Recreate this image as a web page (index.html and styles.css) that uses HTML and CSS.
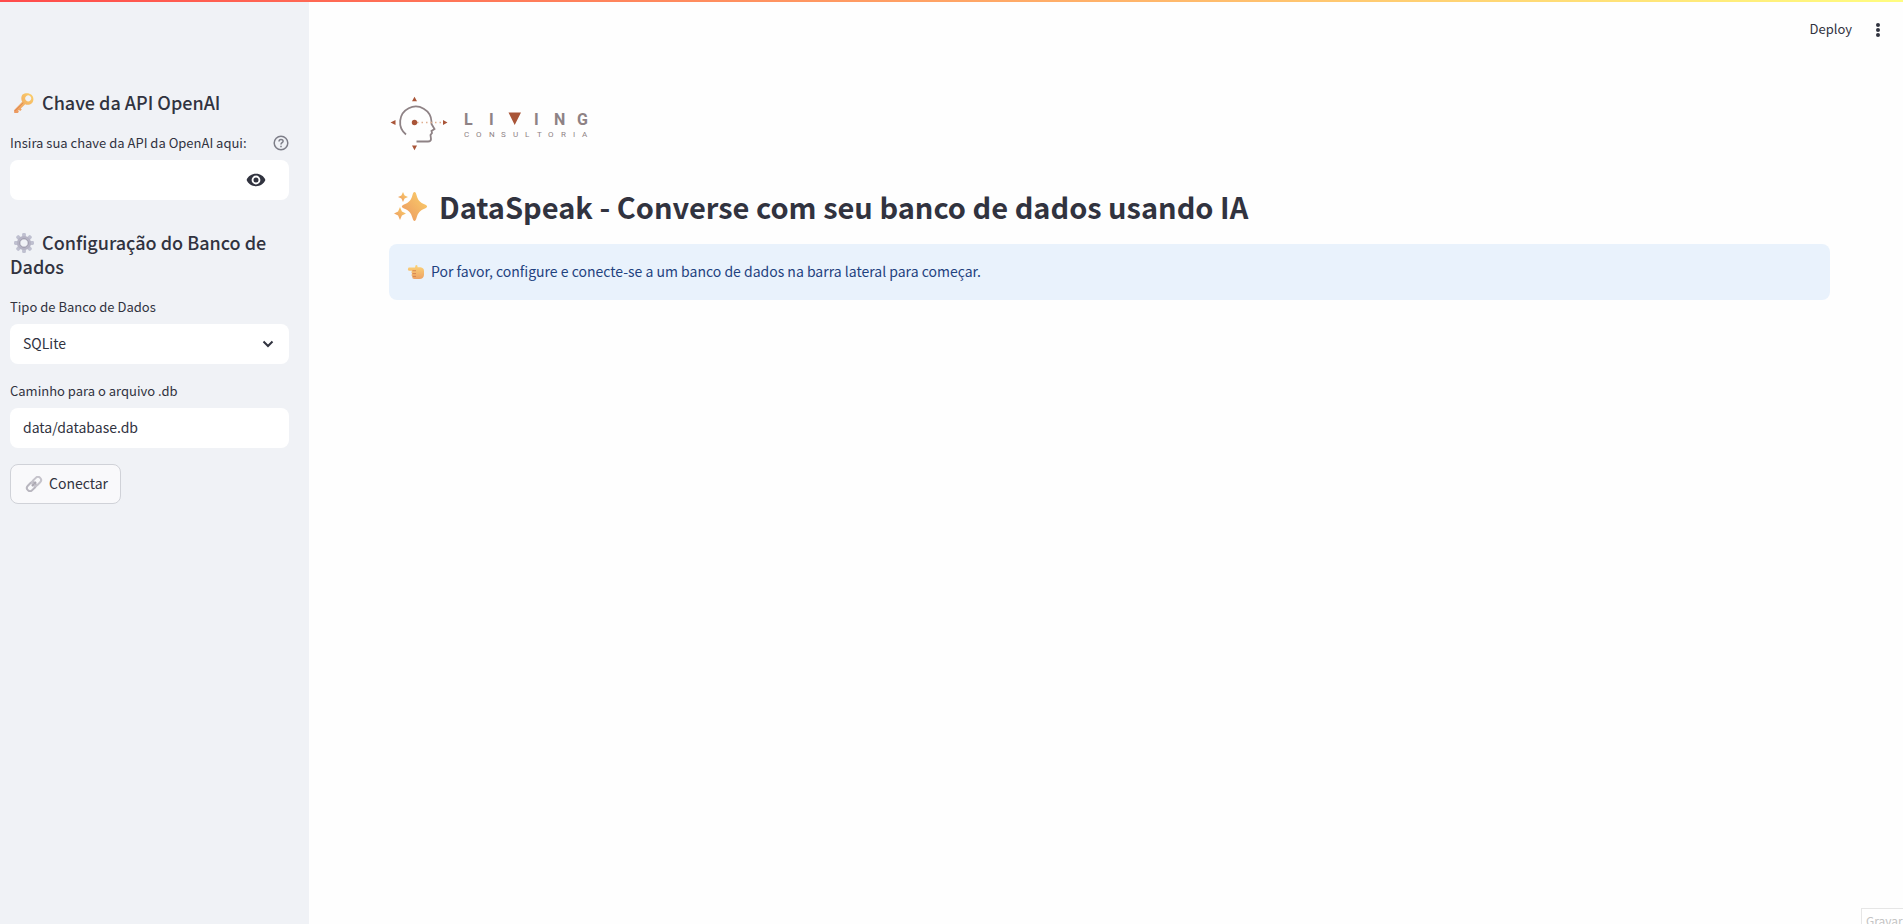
FILE: index.html
```html
<!DOCTYPE html>
<html lang="pt-BR">
<head>
<meta charset="utf-8">
<meta name="viewport" content="width=device-width, initial-scale=1">
<title>DataSpeak</title>
<link rel="stylesheet" href="styles.css">
</head>
<body>
<div class="decoration"></div>
<div class="app">
  <aside class="sidebar">
    <h2 class="section-title">
      <svg class="emoji" viewBox="0 0 28 20" aria-hidden="true">
        <defs><linearGradient id="gold" x1="1" y1="0" x2="0" y2="1"><stop offset="0" stop-color="#fbd16a"/><stop offset="1" stop-color="#eb9660"/></linearGradient></defs>
        <path fill="url(#gold)" fill-rule="evenodd" d="M12.6 1.6C15 -.4 19.400 -.2 21.500 1.800C24 4 24 8 21.800 10.200C19.800 12 17.200 12.200 15.200 11.200L10.800 15.400L11.800 16.500L10.200 18L9 16.900L8 17.800L9 18.800L7.700 20H4.300L4 17.300L12.200 8.800C10.900 6.500 11 3.500 12.600 1.600ZM16.200 3.300A2.900 2.900 0 1 0 20.300 7.400A2.900 2.900 0 0 0 16.200 3.300Z"/>
        <path d="M5 17.900L13.200 9.700" stroke="#d9824f" stroke-width=".8"/>
      </svg>Chave da API OpenAI</h2>
    <div class="field">
      <div class="label-row">
        <label for="api-key">Insira sua chave da API da OpenAI aqui:</label>
        <button class="icon-button help" aria-label="Ajuda">
          <svg width="16" height="16" viewBox="0 0 16 16" fill="none" stroke="#7d7e88" stroke-width="1.500"><circle cx="8" cy="8" r="6.800"/><path d="M6 6.500C6 3.700 10.100 3.800 10.100 6.200C10.100 7.700 8 7.700 8 9.400"/><path d="M8 10.700V12.200"/></svg>
        </button>
      </div>
      <div class="control">
        <input id="api-key" type="password">
        <button class="icon-button reveal" aria-label="Mostrar chave">
          <svg width="20" height="20" viewBox="0 0 20 20"><path fill="#31333f" fill-rule="evenodd" d="M10 3.800C14.300 3.800 18 6.300 19.400 10C18 13.700 14.300 16.200 10 16.200S2 13.700.6 10C2 6.300 5.700 3.800 10 3.800ZM10 5.600A4.400 4.400 0 1 0 10 14.400A4.400 4.400 0 1 0 10 5.600ZM10 7.500A2.500 2.500 0 1 1 10 12.500A2.500 2.500 0 1 1 10 7.500Z"/></svg>
        </button>
      </div>
    </div>
    <h2 class="section-title spaced">
      <svg class="emoji" viewBox="0 0 28 20" aria-hidden="true">
        <g fill="#bfc0d0"><rect id="tooth" x="12.100" y="0" width="3.800" height="20" rx="1.300"/><use href="#tooth" transform="rotate(45 14 10)"/><use href="#tooth" transform="rotate(90 14 10)"/><use href="#tooth" transform="rotate(135 14 10)"/></g>
        <circle cx="14" cy="10" r="5.600" fill="#f0f2f6" stroke="#b5b3c4" stroke-width="3"/><circle cx="14" cy="10" r="4.200" fill="none" stroke="#918e9f" stroke-width=".8"/>
      </svg>Configuração do Banco de Dados</h2>
    <div class="field">
      <label for="db-type">Tipo de Banco de Dados</label>
      <div class="control">
        <select id="db-type"><option>SQLite</option></select>
        <svg class="chevron" width="12" height="8" viewBox="0 0 12 8" fill="none" stroke="#31333f" stroke-width="2"><path d="M1.500 1.500L6 6L10.500 1.500"/></svg>
      </div>
    </div>
    <div class="field">
      <label for="db-path">Caminho para o arquivo .db</label>
      <div class="control"><input id="db-path" type="text" value="data/database.db"></div>
    </div>
    <button class="connect">
      <svg class="emoji-small" viewBox="0 0 22 16" fill="none" aria-hidden="true">
        <g transform="rotate(-45 11 8)"><rect x="2.300" y="4.900" width="10" height="6.200" rx="3.100" stroke="#b8b6bf" stroke-width="2"/><rect x="9.700" y="4.900" width="10" height="6.200" rx="3.100" stroke="#c5c3cb" stroke-width="2"/><path d="M8 8H14" stroke="#aaa7b1" stroke-width="1.500"/></g>
      </svg>Conectar</button>
  </aside>
  <div class="page">
    <header class="toolbar">
      <button class="deploy">Deploy</button>
      <button class="icon-button" aria-label="Menu">
        <svg width="20" height="20" viewBox="0 0 20 20" fill="#31333f"><circle cx="10" cy="5" r="2"/><circle cx="10" cy="10" r="2"/><circle cx="10" cy="15" r="2"/></svg>
      </button>
    </header>
    <main class="content">
      <svg class="logo" viewBox="0 0 208 56" role="img" aria-label="Living Consultoria">
        <g fill="none" stroke="#8e8285" stroke-width="1.800"><path d="M17 38.500A15.700 15.700 0 1 1 42.500 25.500V28L45.500 33L42.500 35L43 37L41.500 39L42 43Q42 45.500 39 45.500H27.500"/></g>
        <path d="M28 26.500H54" stroke="#dfae8f" stroke-width="1.300" stroke-dasharray="1.500 3"/>
        <g fill="#a95538"><circle cx="25.500" cy="26.500" r="2.700"/><path d="M25.500 .8L28 5.200H23ZM25.500 54.200L28 49.500H23ZM1.500 26.500L6.500 24V29ZM58.500 26.500L54 24V29ZM119.500 16.500H132L125.700 29Z"/></g>
        <g class="logo-name"><text x="75" y="29">L</text><text x="100" y="29">I</text><text x="145" y="29">I</text><text x="165" y="29">N</text><text x="188" y="29">G</text></g>
        <g class="logo-sub"><text x="75" y="41">C</text><text x="87" y="41">O</text><text x="100" y="41">N</text><text x="112" y="41">S</text><text x="124" y="41">U</text><text x="136" y="41">L</text><text x="148" y="41">T</text><text x="159" y="41">O</text><text x="172" y="41">R</text><text x="184" y="41">I</text><text x="193" y="41">A</text></g>
      </svg>
      <h1 class="title">
        <svg class="emoji-large" viewBox="0 0 44 32" aria-hidden="true">
          <g fill="url(#gold)"><path d="M25.500 1C26.500 1 27 2 27.500 4C29 9.500 31 11.500 36 13.500C38.800 14.600 38.800 16.300 36 17.400C31 19.500 29 21.500 27.500 27C26.500 31 24.500 31 23.500 27C22 21.500 20 19.500 15 17.400C12.200 16.300 12.200 14.600 15 13.500C20 11.500 22 9.500 23.500 4C24 2 24.500 1 25.500 1Z"/><path d="M14 1L15.600 4.400L19 6L15.600 7.600L14 11L12.400 7.600L9 6L12.400 4.400Z"/><path d="M11 16L12.900 20.600L17 22.500L12.900 24.400L11 29L9.100 24.400L5 22.500L9.100 20.600Z"/></g>
        </svg>DataSpeak - Converse com seu banco de dados usando IA</h1>
      <div class="alert" role="alert">
        <svg class="emoji-small" viewBox="0 0 22 16" aria-hidden="true">
          <defs><linearGradient id="skin" x1="0" y1="0" x2="0" y2="1"><stop offset="0" stop-color="#fcd578"/><stop offset="1" stop-color="#eda264"/></linearGradient></defs>
          <path fill="url(#skin)" d="M3.600 3.500H10L10.600 1.300Q12 .2 12.500 2V3.300H15.500Q19 4 19 7V11Q18.500 15 14.500 15H9.500Q7 15 7.300 12.500Q5.800 11.500 7 9.600Q5.700 8.300 7 6.700H3.600Q2 5.200 3.600 3.500Z"/>
          <path d="M7.500 6.700H11M7.500 9.600H11M7.700 12.400H11" stroke="#ce7a4a" stroke-width=".8"/>
        </svg>Por favor, configure e conecte-se a um banco de dados na barra lateral para começar.</div>
    </main>
  </div>
</div>
<div class="tooltip">Gravar</div>
</body>
</html>
```

FILE: styles.css
```css
* { box-sizing: border-box; }

body {
  margin: 0;
  color: #31333f;
  background: #fefefe;
  font: 400 14px/24px "Noto Sans CJK SC", sans-serif;
  overflow: hidden;
}

button, input, select { font: inherit; color: inherit; }
h1, h2 { margin: 0; }

.decoration {
  position: fixed;
  inset: 0 0 auto;
  z-index: 2;
  height: 2px;
  background: linear-gradient(90deg, #ff4b4b, #fffd80);
}

.app { display: flex; min-height: 100vh; }

.sidebar {
  display: flex;
  flex: 0 0 309px;
  flex-direction: column;
  align-items: stretch;
  gap: 16px;
  padding: 90px 20px 16px 10px;
  background: #f0f2f6;
}

.section-title { padding-bottom: 2px; font-size: 18px; line-height: 24px; font-weight: 500; }
.section-title.spaced { margin-top: 14px; }

.emoji { width: 28px; height: 20px; margin-right: 4px; vertical-align: -3px; }
.emoji-small { width: 22px; height: 16px; margin-right: 4px; vertical-align: -3px; }
.emoji-large { width: 44px; height: 32px; margin-right: 6px; vertical-align: -4px; }

.field { display: flex; flex-direction: column; gap: 6px; }
.field label { font-size: 13px; line-height: 22px; }
.label-row { display: flex; justify-content: space-between; align-items: center; }

.icon-button {
  display: flex;
  padding: 0;
  border: 0;
  background: none;
}

.control {
  display: flex;
  align-items: center;
  height: 40px;
  border-radius: 8px;
  background: #fff;
}
.control input, .control select {
  flex: 1;
  min-width: 0;
  height: 40px;
  padding: 0 13px 2px;
  border: 0;
  background: none;
  appearance: none;
}
.reveal { margin-right: 23px; }
.chevron { margin-right: 15px; }

.connect {
  align-self: flex-start;
  height: 40px;
  padding: 0 12px 2px;
  border: 1px solid #d0d2d8;
  border-radius: 8px;
  background: #f9f9fb;
}

.page { display: flex; flex: 1; flex-direction: column; min-width: 0; }

.toolbar {
  display: flex;
  align-items: center;
  justify-content: flex-end;
  gap: 16px;
  height: 60px;
  padding: 0 15px;
}
.deploy { padding: 0 0 2px; border: 0; background: none; font-size: 13px; }

.content { padding: 36px 73px 36px 80px; }

.logo { display: block; width: 208px; height: 56px; }
.logo-name { fill: #8e8285; font: 700 16px Roboto, sans-serif; }
.logo-sub { fill: #8e8285; font: 400 8px Roboto, sans-serif; }

.title { margin: 34px 0 18px; font-size: 29px; line-height: 40px; font-weight: 700; }

.alert {
  padding: 15px 16px 17px;
  border-radius: 8px;
  background: #e9f2fc;
  color: #1f4280;
}

.tooltip {
  position: fixed;
  right: 0;
  bottom: 0;
  width: 42px;
  height: 16px;
  padding-left: 4px;
  overflow: hidden;
  border: solid #e6e6e6;
  border-width: 1px 0 0 1px;
  color: #c4c4c4;
  background: #fff;
  font-size: 12px;
}
```
